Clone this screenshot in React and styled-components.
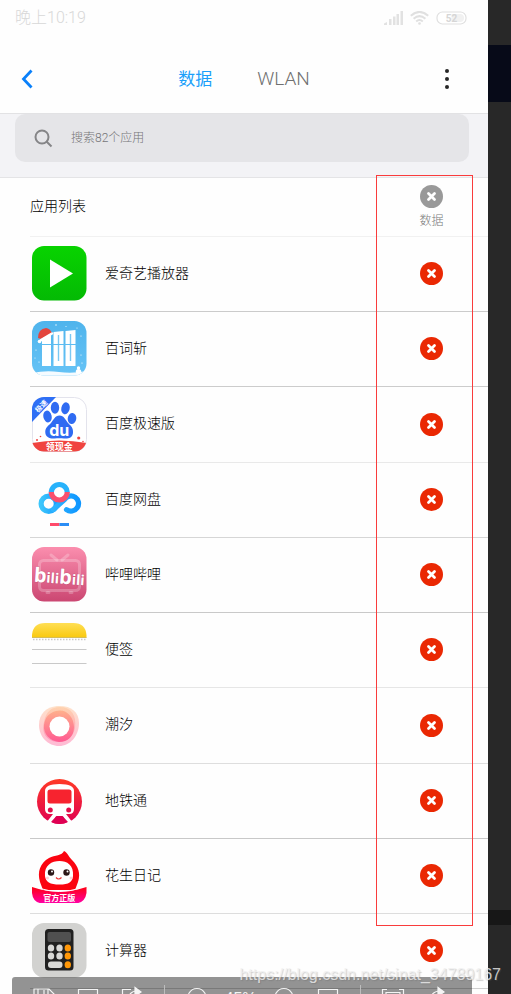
import React from 'react';
import styled, { createGlobalStyle } from 'styled-components';

const GlobalStyle = createGlobalStyle`
  * { box-sizing: border-box; }
  body {
    margin: 0;
    font-family: Roboto, "Noto Sans CJK SC", sans-serif;
    font-weight: 300;
    color: #000;
    background: #282828;
  }
  button { border: 0; padding: 0; background: none; font: inherit; color: inherit; cursor: pointer; }
  svg { display: block; }
`;

const Page = styled.div`
  position: relative;
  display: flex;
  height: 100vh;
  overflow: hidden;
`;

const Screen = styled.main`
  flex: 1;
  min-width: 0;
  background: #fefefe;
`;

const Backdrop = styled.div`
  display: flex;
  flex-direction: column;
  width: 23px;
  background: #282828;
`;

const BackdropBand = styled.div`
  height: ${(p) => p.$height}px;
  background: ${(p) => p.$color};
`;

const BackdropSpace = styled.div`
  flex: ${(p) => (p.$height ? `0 0 ${p.$height}px` : 1)};
`;

const StatusBar = styled.div`
  display: flex;
  align-items: center;
  height: 36px;
  padding: 0 21px 0 15px;
  color: #d8d8d8;
  font-size: 16px;
  line-height: 36px;
`;

const StatusIcons = styled.div`
  display: flex;
  align-items: center;
  gap: 7px;
  margin-left: auto;
`;

const NavBar = styled.header`
  display: flex;
  align-items: center;
  justify-content: space-between;
  height: 78px;
  padding: 8px 31px 0 17px;
  border-bottom: 1px solid #e2e2e4;
`;

const NavButton = styled.button`
  display: flex;
  align-items: center;
  justify-content: center;
  width: 20px;
  height: 32px;
`;

const Tabs = styled.nav`
  display: flex;
  align-items: center;
  gap: 45px;
  padding-left: 14px;
`;

const Tab = styled.button`
  font-size: ${(p) => (p.$active ? 17 : 19)}px;
  font-weight: ${(p) => (p.$active ? 400 : 300)};
  line-height: 24px;
  color: ${(p) => (p.$active ? '#1a9ffa' : '#707070')};
`;

const SearchArea = styled.div`
  height: 64px;
  padding: 0 19px 0 15px;
  background: #f3f3f6;
  border-bottom: 1px solid #e4e4e6;
`;

const SearchBox = styled.label`
  display: flex;
  align-items: center;
  gap: 18px;
  height: 48px;
  padding: 0 18px;
  border-radius: 10px;
  background: #e5e5e8;
`;

const SearchInput = styled.input`
  flex: 1;
  min-width: 0;
  border: 0;
  padding: 0;
  outline: 0;
  background: none;
  font: inherit;
  font-size: 12px;
  color: #555;
  &::placeholder { color: #757578; opacity: 1; }
`;

const ListSection = styled.section`
  position: relative;
  padding-left: 30px;
`;

const ListHeader = styled.div`
  display: flex;
  align-items: center;
  justify-content: space-between;
  height: 59px;
  padding-right: 42px;
  border-bottom: 1px solid #f1f1f1;
`;

const ListTitle = styled.h2`
  margin: 0;
  padding-bottom: 2px;
  font-size: 14px;
  line-height: 20px;
  font-weight: 300;
`;

const ColumnButton = styled.button`
  display: flex;
  flex-direction: column;
  align-items: center;
  gap: 4px;
  width: 29px;
  font-size: 12px;
  line-height: 18px;
  color: #787878;
`;

const AppList = styled.ul`
  margin: 0;
  padding: 0;
  list-style: none;
`;

const AppRow = styled.li`
  display: flex;
  align-items: center;
  height: 75px;
  padding: 0 45px 1px 2px;
  border-bottom: 1px solid ${(p) => p.$line};
  &:nth-child(4n + 3) { height: 76px; }
`;

const AppName = styled.span`
  flex: 1;
  margin-left: 18px;
  padding-bottom: 2px;
  font-size: 14px;
  line-height: 20px;
`;

const Highlight = styled.div`
  position: absolute;
  top: -3px;
  right: 15px;
  width: 97px;
  height: 751px;
  border: 1px solid #f93c3c;
  pointer-events: none;
`;

const CaptureBar = styled.div`
  position: absolute;
  bottom: 0;
  left: 12px;
  right: 39px;
  display: flex;
  align-items: flex-start;
  height: 17px;
  padding: 8px 13px 0 10px;
  overflow: hidden;
  border-radius: 3px 3px 0 0;
  background: rgba(0, 0, 0, 0.42);
  color: #f4f4f4;
`;

const CaptureButton = styled.button`
  display: flex;
  flex: 1;
  justify-content: center;
  height: 24px;
`;

const CaptureValue = styled.output`
  flex: 1;
  padding-top: 4px;
  text-align: center;
  font: 16px/20px "Liberation Sans", sans-serif;
`;

const CaptureDivider = styled.span`
  width: 1px;
  height: 24px;
  margin: 0 10px;
  background: #bdbdbd;
`;

const Watermark = styled.div`
  position: absolute;
  right: 10px;
  bottom: 9px;
  font: 16px/20px "Liberation Sans", sans-serif;
  color: rgba(240, 240, 240, 0.8);
  text-shadow: 1px 1px 1px rgba(100, 100, 100, 0.3);
  pointer-events: none;
`;

const Art = ({ children }) => (
  <svg width="55" height="55" viewBox="0 0 55 55" aria-hidden="true">{children}</svg>
);

const Gradient = ({ id, from, to, horizontal }) => (
  <linearGradient id={id} x1="0" y1="0" x2={horizontal ? 1 : 0} y2={horizontal ? 0 : 1}>
    <stop offset="0" stopColor={from} />
    <stop offset="1" stopColor={to} />
  </linearGradient>
);

const CJK = '"Noto Sans CJK SC", sans-serif';

const IqiyiArt = () => (
  <Art>
    <defs><Gradient id="iq" from="#08d300" to="#04ba04" /></defs>
    <rect width="54.5" height="54.5" rx="12" fill="url(#iq)" />
    <path d="M18 13.5 41 27.5 18 41.5Z" fill="#fff" />
  </Art>
);

const WordsArt = () => (
  <Art>
    <defs>
      <Gradient id="bc" from="#4fb4ec" to="#66c3f6" />
      <clipPath id="bcc"><rect width="54.5" height="54.5" rx="12" /></clipPath>
    </defs>
    <g clipPath="url(#bcc)">
      <rect width="55" height="55" fill="url(#bc)" />
      <path d="M0 52Q14 49 27 51T55 50V55H0Z" fill="#f5fbff" />
      <g fill="#fff">
        <path d="M10 19 19 12V45H10Z" />
        <path d="M21.5 11 31.500 10V45H21.5Z" />
        <path d="M33.500 10 43.500 9V45H33.500Z" />
        <circle cx="46.500" cy="47" r="1.700" /><ellipse cx="46.500" cy="50.500" rx="2.700" ry="2.500" />
        <circle cx="24" cy="4" r=".7" /><circle cx="34" cy="5.500" r=".5" /><circle cx="49" cy="15" r=".6" />
        <circle cx="4" cy="29" r=".6" /><circle cx="7" cy="41" r=".6" /><circle cx="49" cy="34" r=".6" />
        <circle cx="45" cy="7" r=".5" /><circle cx="3" cy="37" r=".5" /><circle cx="50" cy="42" r=".6" />
      </g>
      <path d="M26.500 14V40M38.500 13V40" stroke="#79c8f3" strokeWidth="1.400" />
      <path d="M10 23.500H46" stroke="#5dbcf1" strokeWidth="1" />
      <path d="M6 17Q6 8 14 7Q18 7.500 20 12L9 18Z" fill="#e3453d" />
      <path d="M9 19 20 12.500" stroke="#fff" strokeWidth="2.500" strokeLinecap="round" />
      <circle cx="7.500" cy="20.500" r="1.800" fill="#fff" />
    </g>
  </Art>
);

const BaiduLiteArt = () => (
  <Art>
    <defs><clipPath id="bdc"><rect width="54.5" height="54.5" rx="12" /></clipPath></defs>
    <rect x=".5" y=".5" width="54" height="54" rx="12" fill="#fff" stroke="#e3e3ec" />
    <g clipPath="url(#bdc)">
      <path d="M0 0H24L0 25Z" fill="#2e6ff5" />
      <path d="M0 46Q27 41 55 46V55H0Z" fill="#f04440" />
    </g>
    <text x="10" y="11.500" transform="rotate(-45 10 10)" textAnchor="middle" fontSize="7" fontWeight="700" fontFamily={CJK} fill="#fff">极速</text>
    <g fill="#2f6bf2">
      <ellipse cx="15.500" cy="19.500" rx="4.200" ry="6" transform="rotate(-12 15.500 19.500)" />
      <ellipse cx="23" cy="10.800" rx="4.200" ry="6" />
      <ellipse cx="33.500" cy="11.300" rx="4.200" ry="6" transform="rotate(12 33.500 11.300)" />
      <ellipse cx="40" cy="21.500" rx="4.300" ry="5.500" transform="rotate(8 40 21.500)" />
      <path d="M27.500 18.500C32 18.500 33.500 23 36.500 26.500C39 29 41.500 31 41 36C40.300 41 36 42 32 41.500C28.500 41 26 41 22.500 41.500C18 42 13.500 40 13.300 35.500C13 31 16 29 18.500 26.500C21.500 23 23 18.500 27.500 18.500Z" />
    </g>
    <text x="27.300" y="38.500" textAnchor="middle" fontSize="16" fontWeight="700" fontFamily="Inter, sans-serif" fill="#fff">du</text>
    <g fill="#f04440">
      <circle cx="5" cy="43" r="1" /><circle cx="8.500" cy="39.500" r=".8" />
      <circle cx="46.700" cy="41" r="1.600" /><circle cx="51" cy="44.500" r=".8" />
    </g>
    <text x="27.300" y="53" textAnchor="middle" fontSize="9" fontWeight="700" fontFamily={CJK} fill="#fff">领现金</text>
  </Art>
);

const NetdiskArt = () => (
  <Art>
    <defs>
      <Gradient id="nd" from="#3cc6fb" to="#1a9fff" horizontal />
      <Gradient id="ndr" from="#2fb5ff" to="#0e96ff" horizontal />
    </defs>
    <g fill="none" strokeWidth="5.200">
      <path d="M19.300 20.500A8 8 0 0 1 35.300 20.500" stroke="#27b2fb" />
      <circle cx="16.700" cy="31.700" r="7.600" stroke="url(#nd)" />
      <path d="M21.500 37.500 32.500 27.500A7.600 7.600 0 1 1 34.500 37.700" stroke="url(#ndr)" strokeLinecap="round" />
      <path d="M19.300 20A8 8 0 0 0 35.300 20" stroke="#f9506e" />
    </g>
    <path d="M18 51H27.500V54H18Z" fill="#ff4a6a" />
    <path d="M27.500 51H37V54H27.500Z" fill="#2a8df5" />
  </Art>
);

const BilibiliArt = () => (
  <Art>
    <defs><Gradient id="bl" from="#fb8eae" to="#cb4772" /></defs>
    <rect width="54.5" height="54.5" rx="12" fill="url(#bl)" />
    <g fill="none" stroke="#fff" strokeOpacity=".24" strokeWidth="3" strokeLinecap="round">
      <rect x="7.500" y="13.500" width="40" height="30" rx="4" />
      <path d="M19 8 25 13M36 8 30 13M15 45.500H17M38 45.500H40" />
    </g>
    <text x="27.300" y="36.500" transform="rotate(4 27 30)" textAnchor="middle" fontSize="18" fontWeight="700" fontFamily='"Open Sans", sans-serif' fill="#fff" stroke="#a83760" strokeOpacity=".35" strokeWidth="1" paintOrder="stroke" textRendering="geometricPrecision" fontStyle="normal">
      <tspan fontSize="20">b</tspan><tspan fontSize="14">ili</tspan><tspan fontSize="20">b</tspan><tspan fontSize="14">ili</tspan>
    </text>
  </Art>
);

const NotesArt = () => (
  <Art>
    <defs><Gradient id="nt" from="#ffdf55" to="#f9c90e" /></defs>
    <path d="M0 15.500V13Q1 1 13 1H41.500Q53.500 1 54.500 13V15.500Z" fill="url(#nt)" />
    <path d="M0 15.500H54.500" stroke="#d5bd57" strokeWidth="1" />
    <path d="M1 17.500H54.500" stroke="#c9c9c9" strokeWidth="1.500" strokeDasharray="1.500 1.500" />
    <path d="M0 27.500H54.500M0 41.500H54.500" stroke="#c9c9c9" />
  </Art>
);

const TideArt = () => (
  <Art>
    <defs>
      <Gradient id="t1" from="#ffcfa8" to="#ff8cb8" />
      <Gradient id="t2" from="#ffab85" to="#ff4f8a" />
    </defs>
    <path d="M25 8C38 7 47 13 47 25C47 38 38 48 27 48C16 48 7 39 7 27C7 16 14 9 25 8Z" fill="url(#t1)" opacity=".6" />
    <path d="M28 9C39 9 45 17 43 30C41 40 34 44 25 44C14 43 9 34 12 24C14 14 19 9 28 9Z" fill="url(#t1)" opacity=".8" />
    <path d="M24 13C34 10 42 19 42 29C42 38 36 44 27 44C18 43 11 36 12 27C13 19 17 15 24 13Z" fill="url(#t2)" opacity=".85" />
    <circle cx="27.500" cy="28.500" r="10" fill="#fff" />
  </Art>
);

const MetroArt = () => (
  <Art>
    <defs><Gradient id="mt" from="#ff3a27" to="#df0052" /></defs>
    <circle cx="27.500" cy="28.500" r="22.500" fill="url(#mt)" />
    <path d="M13 18Q13 11 27.500 11T42 18V36Q42 41 37 41H18Q13 41 13 36Z" fill="#fff" />
    <rect x="15.500" y="16.500" width="24" height="14" rx="2.500" fill="#f7232f" />
    <circle cx="18.300" cy="37" r="2.500" fill="#e30b49" /><circle cx="36.700" cy="37" r="2.500" fill="#e30b49" />
    <path d="M21 41 14 50H20L24 43.500H31L35 50H41L34 41Z" fill="#fff" />
    <path d="M24.500 43H30.500L36 49Q27.500 53 19 49Z" fill="#df0052" />
  </Art>
);

const PeanutArt = () => (
  <Art>
    <defs>
      <Gradient id="pn" from="#ff0010" to="#ff00a8" />
    </defs>
    <path d="M32 3C36 5 36 8 40 12C46 18 49 25 46 34L43 42H11L8 34C5 24 8 15 17 10C23 7 30 8 32 3Z" fill="#fb0410" />
    <path d="M13 28C12 17 20 13 27.500 13S42 17 41 28C40.500 34 37 36.500 27.500 36.500S13.500 34 13 28Z" fill="#fff" />
    <circle cx="19" cy="24.500" r="3.200" fill="#2b1717" /><circle cx="34.500" cy="24.500" r="3.200" fill="#2b1717" />
    <circle cx="20" cy="23.500" r="1" fill="#fff" /><circle cx="35.500" cy="23.500" r="1" fill="#fff" />
    <path d="M24 29.500Q26.500 32.500 29.500 29.500" fill="none" stroke="#e33" strokeWidth="1.200" />
    <circle cx="15.500" cy="30" r="1.500" fill="#ffd0d4" /><circle cx="39" cy="30" r="1.500" fill="#ffd0d4" />
    <path d="M0 39Q27 48 54.500 39V45Q53 55 43 55.500H11Q1 55 0 45Z" fill="url(#pn)" />
    <path d="M8 40.500Q27.500 46.500 47 40.500" fill="none" stroke="#fff" strokeWidth="1" />
    <text x="27.300" y="53" textAnchor="middle" fontSize="8" fontWeight="700" fontFamily={CJK} fill="#fff">官方正版</text>
  </Art>
);

const CalculatorArt = () => (
  <Art>
    <rect width="54.5" height="54.5" rx="12" fill="#d2d2d0" />
    <rect x="13" y="6" width="28.500" height="41.500" rx="3.500" fill="#202020" />
    <rect x="15.500" y="9" width="23.500" height="10" rx="2" fill="#505050" />
    {[25, 33].map((y) => (
      <g key={y}>
        <ellipse cx="19" cy={y} rx="3.200" ry="3.600" fill="#d8d8d6" />
        <ellipse cx="27.500" cy={y} rx="3.200" ry="3.600" fill="#d8d8d6" />
        <ellipse cx="35.800" cy={y} rx="3.200" ry="3.600" fill="#ff9708" />
      </g>
    ))}
    <rect x="16" y="38.500" width="14.500" height="6.500" rx="3" fill="#d8d8d6" />
    <ellipse cx="35.800" cy="41.800" rx="3.200" ry="3.500" fill="#ff9708" />
  </Art>
);

const BlockIcon = ({ color }) => (
  <svg width="23" height="23" viewBox="0 0 23 23" aria-hidden="true">
    <circle cx="11.500" cy="11.500" r="11.500" fill={color} />
    <path d="M8.500 8.500 14.500 14.500M14.500 8.500 8.500 14.500" stroke="#fff" strokeWidth="2.800" strokeLinecap="round" />
  </svg>
);

const BackIcon = () => (
  <svg width="12" height="20" viewBox="0 0 12 20" fill="none" stroke="#0a80fa" strokeWidth="2.800" aria-hidden="true">
    <path d="M10.500 1.500 2.500 10 10.500 18.500" />
  </svg>
);

const MoreIcon = () => (
  <svg width="6" height="22" viewBox="0 0 6 22" fill="#262626" aria-hidden="true">
    <circle cx="3" cy="3" r="2" /><circle cx="3" cy="11" r="2" /><circle cx="3" cy="19" r="2" />
  </svg>
);

const SearchIcon = () => (
  <svg width="20" height="20" viewBox="0 0 20 20" fill="none" stroke="#858587" strokeWidth="2" aria-hidden="true">
    <circle cx="9" cy="9" r="6.500" /><path d="M13.500 13.500 18.500 18.500" />
  </svg>
);

const SignalIcon = () => (
  <svg width="19" height="14" viewBox="0 0 19 14" fill="#e2e2e2" aria-hidden="true">
    <path d="M0 14V12.500L3 11V14Z" /><rect x="5" y="8" width="2.500" height="6" />
    <rect x="9" y="5.500" width="2.500" height="8.500" /><rect x="12.500" y="3" width="2.500" height="11" />
    <rect x="16.500" y="0" width="2.500" height="14" />
  </svg>
);

const WifiIcon = () => (
  <svg width="19" height="14" viewBox="0 0 19 14" fill="none" stroke="#e0e0e0" strokeWidth="2" aria-hidden="true">
    <path d="M.8 4.800Q9.500-3 18.200 4.800M3.600 7.800Q9.500 2.500 15.400 7.800M6.200 10.500Q9.500 7.500 12.800 10.500" />
    <circle cx="9.500" cy="12.500" r="1.300" fill="#e0e0e0" stroke="none" />
  </svg>
);

const BatteryIcon = () => (
  <svg width="31" height="14" viewBox="0 0 31 14" role="img" aria-label="52">
    <rect x="1" y="1" width="29" height="12" rx="5.500" fill="#fff" stroke="#e0e0e0" strokeWidth="1.200" />
    <path d="M15.500 3H24A4 4 0 0 1 24 11H15.500Z" fill="#f1f1f1" />
    <text x="15.500" y="10.500" textAnchor="middle" fontSize="10" fontWeight="700" fontFamily="Roboto, sans-serif" fill="#d6d6d6">52</text>
  </svg>
);

const CAPTURE_PATHS = {
  save: 'M2 4H17L22 9V24H2ZM6 4V11H16V4M12 5V9',
  window: 'M2.500 4.500H21.500V24H2.500Z',
  share: 'M11 4.500H2.500V24H20V14M8 15Q9 6 17 6',
  circle: 'M12 3.500A9 9 0 1 1 11.900 3.500Z',
  frame: 'M1.500 9V4.500H6M18 4.500H22.500V9M5 7.500H19V22H5Z',
  redo: 'M5 16Q6 6 15 6',
};

const CaptureIcon = ({ name }) => (
  <svg width="24" height="24" viewBox="0 0 24 24" fill="none" stroke="currentColor" strokeWidth="1.200" aria-hidden="true">
    <path d={CAPTURE_PATHS[name]} />
    {name === 'share' && <path d="M15 2.500 21 7 15 11Z" fill="currentColor" />}
    {name === 'redo' && <path d="M13 2.500 19 7 13 11Z" fill="currentColor" />}
  </svg>
);

const Tool = ({ label, icon }) => (
  <CaptureButton aria-label={label}><CaptureIcon name={icon} /></CaptureButton>
);

const APPS = [
  { name: '爱奇艺播放器', Icon: IqiyiArt, line: '#cbcbcb' },
  { name: '百词斩', Icon: WordsArt, line: '#cccccc' },
  { name: '百度极速版', Icon: BaiduLiteArt, line: '#e9e9e9' },
  { name: '百度网盘', Icon: NetdiskArt, line: '#d6d6d6' },
  { name: '哔哩哔哩', Icon: BilibiliArt, line: '#c9c9c9' },
  { name: '便签', Icon: NotesArt, line: '#e6e6e6' },
  { name: '潮汐', Icon: TideArt, line: '#dedede' },
  { name: '地铁通', Icon: MetroArt, line: '#c8c8c8' },
  { name: '花生日记', Icon: PeanutArt, line: '#dddddd' },
  { name: '计算器', Icon: CalculatorArt, line: '#d0d0d0' },
];

export default function App() {
  return (
    <>
      <GlobalStyle />
      <Page>
        <Screen>
          <StatusBar>
            <span>晚上10:19</span>
            <StatusIcons><SignalIcon /><WifiIcon /><BatteryIcon /></StatusIcons>
          </StatusBar>
          <NavBar>
            <NavButton aria-label="返回"><BackIcon /></NavButton>
            <Tabs>
              <Tab $active>数据</Tab>
              <Tab>WLAN</Tab>
            </Tabs>
            <NavButton aria-label="更多"><MoreIcon /></NavButton>
          </NavBar>
          <SearchArea>
            <SearchBox>
              <SearchIcon />
              <SearchInput type="search" aria-label="搜索应用" placeholder="搜索82个应用" />
            </SearchBox>
          </SearchArea>
          <ListSection>
            <ListHeader>
              <ListTitle>应用列表</ListTitle>
              <ColumnButton><BlockIcon color="#999" />数据</ColumnButton>
            </ListHeader>
            <AppList>
              {APPS.map(({ name, Icon, line }) => (
                <AppRow key={name} $line={line}>
                  <Icon />
                  <AppName>{name}</AppName>
                  <button aria-label={`${name} 数据`}><BlockIcon color="#ea2803" /></button>
                </AppRow>
              ))}
            </AppList>
            <Highlight />
          </ListSection>
        </Screen>
        <Backdrop>
          <BackdropSpace $height={45} />
          <BackdropBand $height={57} $color="#070a18" />
          <BackdropSpace />
          <BackdropBand $height={15} $color="#171717" />
          <BackdropSpace $height={69} />
        </Backdrop>
        <CaptureBar>
          <Tool label="保存" icon="save" />
          <Tool label="窗口" icon="window" />
          <Tool label="分享" icon="share" />
          <CaptureDivider />
          <Tool label="缩小" icon="circle" />
          <CaptureValue>45%</CaptureValue>
          <Tool label="放大" icon="circle" />
          <Tool label="适应" icon="window" />
          <CaptureDivider />
          <Tool label="截图" icon="frame" />
          <Tool label="重做" icon="redo" />
        </CaptureBar>
        <Watermark>https://blog.csdn.net/sinat_34789167</Watermark>
      </Page>
    </>
  );
}
